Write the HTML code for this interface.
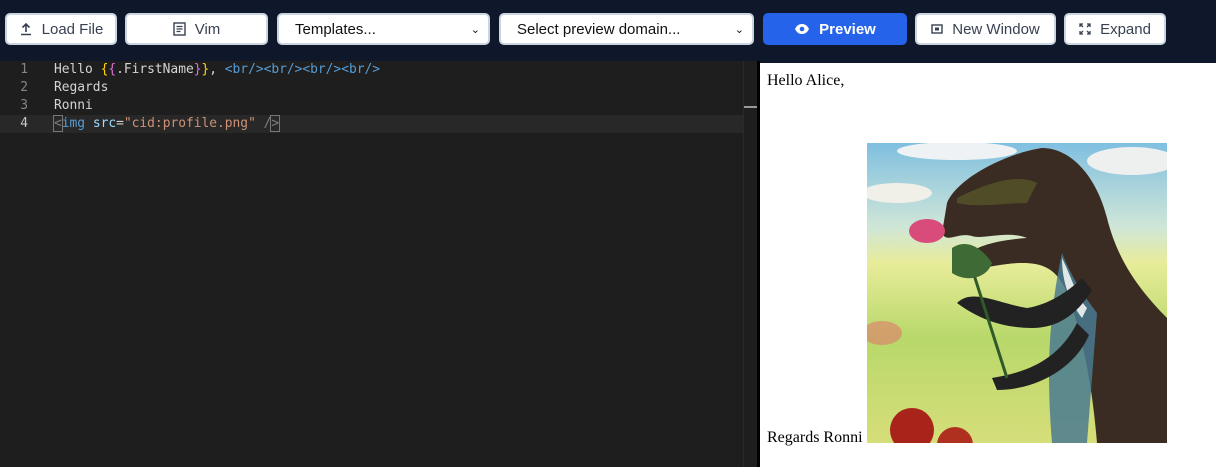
<!DOCTYPE html>
<html><head><meta charset="utf-8"><style>
*{box-sizing:border-box;margin:0;padding:0}
body{width:1216px;height:467px;overflow:hidden;background:#0f172a;font-family:"Liberation Sans",sans-serif;position:relative}
.btn{position:absolute;top:13px;height:32px;background:#fff;border:2px solid #cbd5e1;border-radius:5px;color:#374151;font-size:15px;display:flex;align-items:center;justify-content:center;gap:9px}
.sel{justify-content:space-between;padding:0 8px 0 16px;color:#111}
.ed{position:absolute;left:0;top:61px;width:743px;height:406px;background:#1e1e1e;font-family:"DejaVu Sans Mono","Liberation Mono",monospace;font-size:12.9px}
.ln{position:absolute;left:0;width:743px;height:18px;line-height:18px}
.ln .n{position:absolute;left:0;width:28px;text-align:right;color:#858585}
.ln .t{position:absolute;left:54px;color:#d4d4d4;white-space:pre}
.sb{position:absolute;left:743px;top:61px;width:14px;height:406px;background:#1e1e1e;border-left:1px solid #2a2a2a}
.pv{position:absolute;left:760px;top:63px;width:456px;height:404px;background:#fff;font-family:"Liberation Serif",serif;font-size:16px;color:#000}
</style></head><body>
<div class="btn" style="left:5px;width:112px"><svg width="14" height="14" viewBox="0 0 14 14"><path d="M7 10V2M3.5 5.5L7 2l3.5 3.5M2 12.5h10" stroke="#374151" stroke-width="1.6" fill="none"/></svg>Load File</div>
<div class="btn" style="left:125px;width:143px"><svg width="13" height="14" viewBox="0 0 13 14"><rect x="1" y="1" width="11" height="12" stroke="#374151" stroke-width="1.4" fill="none"/><path d="M3.5 4.5h6M3.5 7h6M3.5 9.5h4" stroke="#374151" stroke-width="1.2"/></svg>Vim</div>
<div class="btn sel" style="left:277px;width:213px"><span>Templates...</span><span style="font-size:11px">&#x2304;</span></div>
<div class="btn sel" style="left:499px;width:255px"><span>Select preview domain...</span><span style="font-size:11px">&#x2304;</span></div>
<div class="btn" style="left:763px;width:144px;background:#2563eb;border-color:#2563eb;color:#fff;font-weight:bold"><svg width="16" height="12" viewBox="0 0 16 12"><path d="M1 6C3 2 5.5 1 8 1s5 1 7 5c-2 4-4.5 5-7 5S3 10 1 6z" fill="#fff"/><circle cx="8" cy="6" r="2.3" fill="#2563eb"/></svg>Preview</div>
<div class="btn" style="left:915px;width:141px"><svg width="12" height="10" viewBox="0 0 12 10"><rect x="1" y="1" width="10" height="8" stroke="#374151" stroke-width="1.4" fill="none"/><rect x="4" y="3.5" width="4" height="3" fill="#374151"/></svg>New Window</div>
<div class="btn" style="left:1064px;width:102px"><svg width="12" height="12" viewBox="0 0 12 12"><path d="M1 4V1h3M8 1h3v3M11 8v3H8M4 11H1V8M1 1l3 3M11 1L8 4M11 11L8 8M1 11l3-3" stroke="#374151" stroke-width="1.3" fill="none"/></svg>Expand</div>
<div class="ed">
<div class="ln" style="top:0"><span class="n">1</span><span class="t">Hello <span style="color:#ffd700">{</span><span style="color:#da70d6">{</span>.FirstName<span style="color:#da70d6">}</span><span style="color:#ffd700">}</span>, <span style="color:#569cd6">&lt;br/&gt;&lt;br/&gt;&lt;br/&gt;&lt;br/&gt;</span></span></div>
<div class="ln" style="top:18px"><span class="n">2</span><span class="t">Regards</span></div>
<div class="ln" style="top:36px"><span class="n">3</span><span class="t">Ronni</span></div>
<div class="ln" style="top:54px;background:#282828"><span class="n" style="color:#c6c6c6">4</span><span class="t"><span style="color:#808080;outline:1px solid #777">&lt;</span><span style="color:#569cd6">img</span> <span style="color:#9cdcfe">src</span>=<span style="color:#ce9178">"cid:profile.png"</span> <span style="color:#808080">/<span style="outline:1px solid #777">&gt;</span></span></span></div>
</div>
<div class="sb"><div style="position:absolute;top:45px;left:0;width:14px;height:2px;background:#999"></div></div>
<div style="position:absolute;left:757px;top:61px;width:3px;height:406px;background:#000"></div>
<div class="pv">
<div style="position:absolute;left:7px;top:9px">Hello Alice,</div>
<div style="position:absolute;left:7px;top:366px">Regards Ronni</div>
<svg style="position:absolute;left:107px;top:80px" width="300" height="300" viewBox="0 0 300 300">
<defs><linearGradient id="g" x1="0" y1="0" x2="0" y2="1"><stop offset="0" stop-color="#7fbfe0"/><stop offset=".28" stop-color="#cfe6d8"/><stop offset=".4" stop-color="#e8ec9a"/><stop offset=".65" stop-color="#b8d86a"/><stop offset="1" stop-color="#d6de7a"/></linearGradient></defs>
<rect width="300" height="300" fill="url(#g)"/>
<ellipse cx="90" cy="8" rx="60" ry="9" fill="#eef2f4"/><ellipse cx="30" cy="50" rx="35" ry="10" fill="#f0efe8"/><ellipse cx="265" cy="18" rx="45" ry="14" fill="#eef0f0"/>
<path d="M80 60C90 35 140 10 175 5c30 0 55 30 65 70 10 40 30 70 60 100v125H230c-5-60-15-110-30-150-10-25-25-30-45-30-25 0-45 10-55 0-5-10 15-22 60-25-20-8-45 2-55-2-15-4-25 8-30-3z" fill="#3a2c22"/>
<path d="M90 55c30-15 60-25 80-15l-10 20c-20 0-50 5-70 0z" fill="#5a5a2a" opacity=".7"/>
<path d="M195 110c10 25 20 40 35 60l-10 130h-35c-5-60-5-120 10-190z" fill="#4a7a90" opacity=".85"/>
<path d="M195 115c10 20 15 40 25 50l-5 10c-15-20-20-40-20-60z" fill="#dfe8e6"/>
<path d="M90 160c15-15 40 0 70 5 20-3 40-15 55-30l10 12c-15 25-35 38-60 38-30 0-55-10-75-25z" fill="#222"/>
<path d="M125 235c30-5 65-15 85-55l12 12c-15 35-55 55-92 55z" fill="#222"/>
<path d="M100 110l40 125" stroke="#2f5a2a" stroke-width="3"/>
<path d="M85 105c15-10 30 0 40 15-5 15-25 20-40 10z" fill="#3e6b35"/>
<ellipse cx="60" cy="88" rx="18" ry="12" fill="#d94b7a"/>
<ellipse cx="15" cy="190" rx="20" ry="12" fill="#e07a6a" opacity=".6"/>
<circle cx="45" cy="287" r="22" fill="#a8241a"/><circle cx="88" cy="302" r="18" fill="#b03020"/>
</svg>
</div>
</body></html>
